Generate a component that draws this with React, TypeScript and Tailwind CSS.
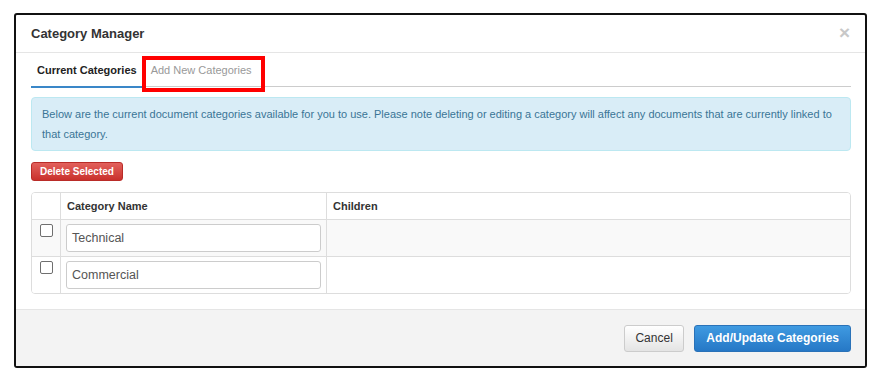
import React from "react";

const font = { fontFamily: '"Liberation Sans", Arial, Helvetica, sans-serif' };

function Checkbox() {
  return <span className="block w-[13px] h-[13px] rounded-[2px] border border-[#6f6f6f] bg-white" />;
}

function Row({ value, striped, last }: { value: string; striped?: boolean; last?: boolean }) {
  return (
    <div
      className={`grid grid-cols-[29px_266px_1fr] ${last ? "h-[36px]" : "h-[37px] border-b border-[#dddddd]"} ${
        striped ? "bg-[#f9f9f9]" : "bg-white"
      }`}
    >
      <div className="border-r border-[#dddddd] pl-[8px] pt-[4px]">
        <Checkbox />
      </div>
      <div className="border-r border-[#dddddd] px-[5px] pt-[4px]">
        <div className="h-[28px] rounded-[3px] border border-[#cccccc] bg-white pl-[5px] flex items-center text-[12.5px] text-[#555555]">
          {value}
        </div>
      </div>
      <div />
    </div>
  );
}

export default function App() {
  return (
    <div className="w-[874px] h-[379px] bg-white overflow-hidden" style={font}>
      <div className="ml-[14px] mt-[13px] w-[853px] h-[355px] border-2 border-[#111111] rounded-[3px] bg-white flex flex-col overflow-hidden">
        {/* Header */}
        <div className="h-[38px] border-b border-[#e5e5e5] pl-[15px] pr-[15px] flex items-center justify-between">
          <span className="text-[13px] font-bold text-[#333333]">
            Category Manager
          </span>
          <span className="text-[19px] font-bold leading-none text-[#c8c8c8] -mt-[2px]">×</span>
        </div>

        {/* Body */}
        <div className="h-[256px] pl-[15px] pr-[14px] flex flex-col">
          {/* Tabs */}
          <div className="relative flex items-start border-b border-[#cccccc] h-[34px]">
            <div className="px-[6px] pt-[10px] pb-[8px] leading-[15px] text-[11px] font-bold text-[#222222] border-b-2 border-[#3a87c8] -mb-[2px] h-[35px]">
              Current Categories
            </div>
            <div className="px-[8px] pt-[10px] pb-[8px] leading-[15px] text-[11px] text-[#999999]">
              Add New Categories
            </div>
            <div className="absolute left-[111px] top-[3px] w-[123px] h-[36px] border-[4px] border-[#ff0000]" />
          </div>

          {/* Alert */}
          <div className="mt-[10px] h-[54px] rounded-[4px] border border-[#bce8f1] bg-[#d9edf7] px-[10px] py-[6px] text-[11px] leading-[20px] text-[#3a7596]">
            Below are the current document categories available for you to use. Please note deleting or editing a category will affect any documents that are currently linked to that category.
          </div>

          {/* Delete button */}
          <div className="mt-[11px] flex">
            <div className="h-[19px] px-[8px] flex items-center rounded-[3px] border border-[#b92c28] bg-gradient-to-b from-[#e2605b] to-[#c9302c] text-white text-[10px] font-bold">
              Delete Selected
            </div>
          </div>

          {/* Table */}
          <div className="mt-[11px] h-[102px] rounded-[4px] border border-[#dddddd] overflow-hidden">
            <div className="grid grid-cols-[29px_266px_1fr] h-[27px] border-b border-[#dddddd] bg-white text-[11px] font-bold text-[#333333]">
              <div className="border-r border-[#dddddd]" />
              <div className="border-r border-[#dddddd] pl-[6px] flex items-center">Category Name</div>
              <div className="pl-[6px] flex items-center">Children</div>
            </div>
            <Row value="Technical" striped />
            <Row value="Commercial" last />
          </div>
        </div>

        {/* Footer */}
        <div className="flex-1 border-t border-[#e5e5e5] bg-[#f3f3f3] pr-[14px] flex items-center justify-end gap-[10px]">
          <div className="h-[27px] px-[10.5px] flex items-center rounded-[3px] border border-[#cccccc] bg-gradient-to-b from-[#ffffff] to-[#e4e4e4] text-[12px] text-[#333333]">
            Cancel
          </div>
          <div className="h-[27px] px-[11px] flex items-center rounded-[3px] border border-[#2a72b8] bg-gradient-to-b from-[#3f9ae1] to-[#2678c6] text-[12px] font-bold text-white">
            Add/Update Categories
          </div>
        </div>
      </div>
    </div>
  );
}
